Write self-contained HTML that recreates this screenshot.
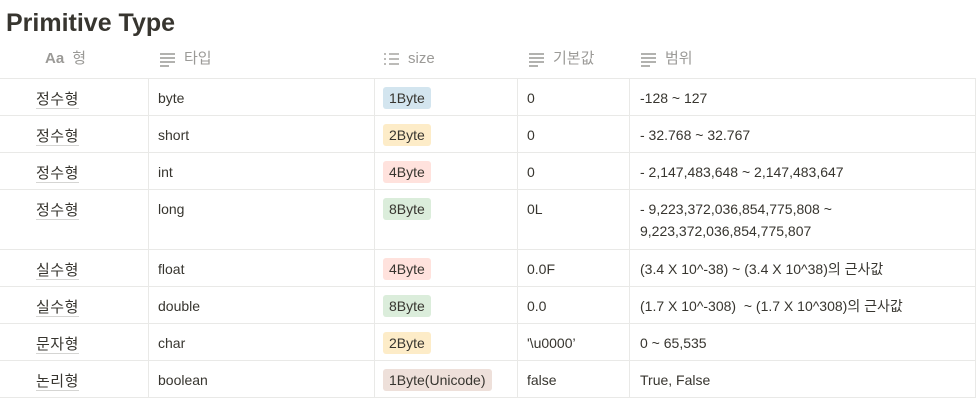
<!DOCTYPE html>
<html><head><meta charset="utf-8"><style>
body{margin:0;width:976px;height:401px;background:#fff;position:relative;overflow:hidden;font-family:"Segoe UI","Liberation Sans","Noto Sans CJK KR",sans-serif;color:#37352f;}
h1{position:absolute;left:6px;top:5px;margin:0;font-size:25px;font-weight:700;color:#37352f;line-height:36px}
.h{position:absolute;top:48px;font-size:15px;color:#9b9a97;line-height:22px;display:flex;align-items:center;gap:8px}
.c{position:absolute;font-size:14px;line-height:22px;white-space:nowrap}
.hl{position:absolute;height:1px;background:#e9e9e7;left:0;width:976px}
.vl{position:absolute;width:1px;background:#e9e9e7;top:78px;height:319px}
.t{display:inline-block;padding:0 6px;border-radius:3px;line-height:22px}
.u{border-bottom:1px solid #d5d5d3;line-height:17px;display:inline-block;font-size:15px;letter-spacing:0.5px}
</style></head><body>
<h1>Primitive Type</h1>
<div class="h" style="left:45px"><span style="font-weight:600">Aa</span><span>형</span></div>
<div class="h" style="left:159px"><svg width="17" height="15"><g stroke="#a5a4a1" stroke-width="1.7"><line x1="1" y1="2" x2="16" y2="2"/><line x1="1" y1="6" x2="16" y2="6"/><line x1="1" y1="10" x2="16" y2="10"/><line x1="1" y1="14" x2="10" y2="14"/></g></svg><span>타입</span></div>
<div class="h" style="left:383px"><svg width="17" height="15"><g stroke="#a5a4a1" stroke-width="1.5"><line x1="1" y1="2" x2="3" y2="2"/><line x1="6" y1="2" x2="16" y2="2"/><line x1="1" y1="7" x2="3" y2="7"/><line x1="6" y1="7" x2="16" y2="7"/><line x1="1" y1="12" x2="3" y2="12"/><line x1="6" y1="12" x2="16" y2="12"/></g></svg><span>size</span></div>
<div class="h" style="left:528px"><svg width="17" height="15"><g stroke="#a5a4a1" stroke-width="1.7"><line x1="1" y1="2" x2="16" y2="2"/><line x1="1" y1="6" x2="16" y2="6"/><line x1="1" y1="10" x2="16" y2="10"/><line x1="1" y1="14" x2="10" y2="14"/></g></svg><span>기본값</span></div>
<div class="h" style="left:640px"><svg width="17" height="15"><g stroke="#a5a4a1" stroke-width="1.7"><line x1="1" y1="2" x2="16" y2="2"/><line x1="1" y1="6" x2="16" y2="6"/><line x1="1" y1="10" x2="16" y2="10"/><line x1="1" y1="14" x2="10" y2="14"/></g></svg><span>범위</span></div>

<div class="hl" style="top:78px"></div><div class="hl" style="top:115px"></div><div class="hl" style="top:152px"></div><div class="hl" style="top:189px"></div><div class="hl" style="top:249px"></div><div class="hl" style="top:286px"></div><div class="hl" style="top:323px"></div><div class="hl" style="top:360px"></div><div class="hl" style="top:397px"></div>
<div class="vl" style="left:148px"></div><div class="vl" style="left:374px"></div><div class="vl" style="left:517px"></div><div class="vl" style="left:629px"></div><div class="vl" style="left:975px"></div>

<div class="c" style="left:36px;top:88px"><span class="u">정수형</span></div><div class="c" style="left:158px;top:87px">byte</div><div class="c" style="left:383px;top:87px"><span class="t" style="background:#d3e5ef">1Byte</span></div><div class="c" style="left:527px;top:87px">0</div><div class="c" style="left:640px;top:87px">-128 ~ 127</div>
<div class="c" style="left:36px;top:125px"><span class="u">정수형</span></div><div class="c" style="left:158px;top:124px">short</div><div class="c" style="left:383px;top:124px"><span class="t" style="background:#fdecc8">2Byte</span></div><div class="c" style="left:527px;top:124px">0</div><div class="c" style="left:640px;top:124px">- 32.768 ~ 32.767</div>
<div class="c" style="left:36px;top:162px"><span class="u">정수형</span></div><div class="c" style="left:158px;top:161px">int</div><div class="c" style="left:383px;top:161px"><span class="t" style="background:#ffe2dd">4Byte</span></div><div class="c" style="left:527px;top:161px">0</div><div class="c" style="left:640px;top:161px">- 2,147,483,648 ~ 2,147,483,647</div>
<div class="c" style="left:36px;top:199px"><span class="u">정수형</span></div><div class="c" style="left:158px;top:198px">long</div><div class="c" style="left:383px;top:198px"><span class="t" style="background:#dbeddb">8Byte</span></div><div class="c" style="left:527px;top:198px">0L</div><div class="c" style="left:640px;top:198px">- 9,223,372,036,854,775,808 ~<br>9,223,372,036,854,775,807</div>
<div class="c" style="left:36px;top:259px"><span class="u">실수형</span></div><div class="c" style="left:158px;top:258px">float</div><div class="c" style="left:383px;top:258px"><span class="t" style="background:#ffe2dd">4Byte</span></div><div class="c" style="left:527px;top:258px">0.0F</div><div class="c" style="left:640px;top:258px">(3.4 X 10^-38) ~ (3.4 X 10^38)의 근사값</div>
<div class="c" style="left:36px;top:296px"><span class="u">실수형</span></div><div class="c" style="left:158px;top:295px">double</div><div class="c" style="left:383px;top:295px"><span class="t" style="background:#dbeddb">8Byte</span></div><div class="c" style="left:527px;top:295px">0.0</div><div class="c" style="left:640px;top:295px">(1.7 X 10^-308) &nbsp;~ (1.7 X 10^308)의 근사값</div>
<div class="c" style="left:36px;top:333px"><span class="u">문자형</span></div><div class="c" style="left:158px;top:332px">char</div><div class="c" style="left:383px;top:332px"><span class="t" style="background:#fdecc8">2Byte</span></div><div class="c" style="left:527px;top:332px">'\u0000’</div><div class="c" style="left:640px;top:332px">0 ~ 65,535</div>
<div class="c" style="left:36px;top:370px"><span class="u">논리형</span></div><div class="c" style="left:158px;top:369px">boolean</div><div class="c" style="left:383px;top:369px"><span class="t" style="background:#eee0da">1Byte(Unicode)</span></div><div class="c" style="left:527px;top:369px">false</div><div class="c" style="left:640px;top:369px">True, False</div>
</body></html>
